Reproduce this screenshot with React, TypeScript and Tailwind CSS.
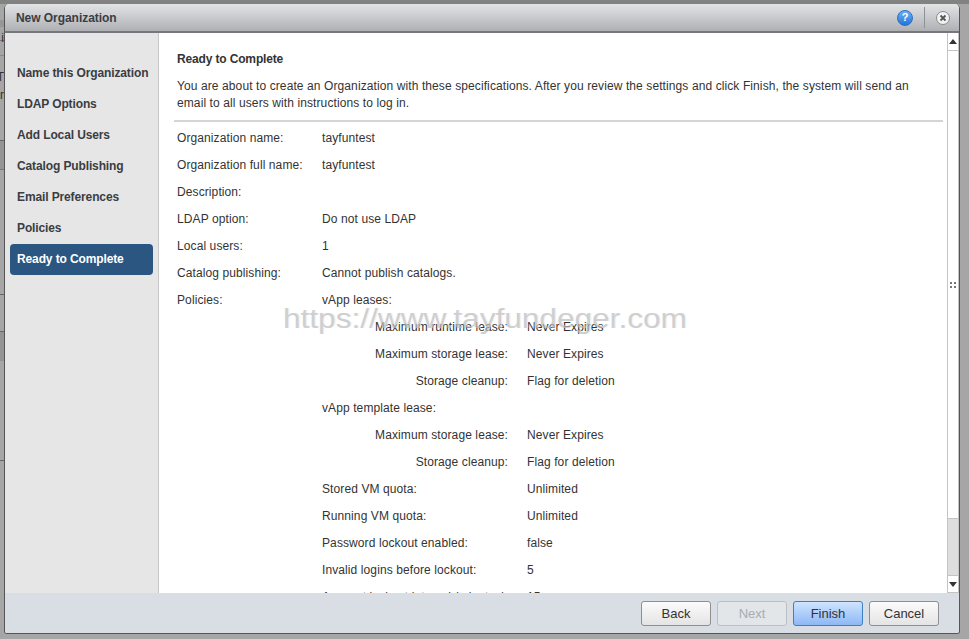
import { ReactNode } from "react";

const steps = [
  "Name this Organization",
  "LDAP Options",
  "Add Local Users",
  "Catalog Publishing",
  "Email Preferences",
  "Policies",
  "Ready to Complete",
];

const summary = [
  { label: "Organization name:", value: "tayfuntest" },
  { label: "Organization full name:", value: "tayfuntest" },
  { label: "Description:", value: "" },
  { label: "LDAP option:", value: "Do not use LDAP" },
  { label: "Local users:", value: "1" },
  { label: "Catalog publishing:", value: "Cannot publish catalogs." },
];

function Row({ children }: { children: ReactNode }) {
  return <div className="flex h-[27px] items-center whitespace-nowrap">{children}</div>;
}

function LeaseRow({ label, value }: { label: string; value: string }) {
  return (
    <Row>
      <span className="w-[186px] text-right">{label}</span>
      <span className="ml-[19px]">{value}</span>
    </Row>
  );
}

function PolicyRow({ label, value }: { label: string; value: string }) {
  return (
    <Row>
      <span className="w-[205px]">{label}</span>
      <span>{value}</span>
    </Row>
  );
}

function Btn({ children, kind }: { children: ReactNode; kind?: "primary" | "disabled" }) {
  let cls = "border-[#8f8f8f] bg-gradient-to-b from-[#fbfbfb] to-[#e4e4e4] text-[#333]";
  if (kind === "primary") cls = "border-[#3f7fc4] bg-gradient-to-b from-[#cfe4ff] to-[#8db8f5] text-[#333]";
  if (kind === "disabled") cls = "border-[#bcc0c4] bg-[#e3e6e9] text-[#a9acb0]";
  return (
    <button type="button" className={`h-[25px] w-[70px] rounded-[3px] border text-[13px] ${cls}`}>
      {children}
    </button>
  );
}

function BackdropStrip() {
  return (
    <div className="w-[4px] shrink-0 overflow-hidden text-[12px] text-[#333]">
      <div className="h-[16px]" />
      <div className="h-[7px] bg-[#979797]" />
      <div className="relative h-[14px] border-b border-[#777]">
        <span className="absolute right-0 top-[2px]">i</span>
      </div>
      <div className="h-[15px] border-b border-[#8a8a8a]" />
      <div className="relative h-[85px] border-b border-[#666]">
        <span className="absolute right-0 top-[12px]">T</span>
        <span className="absolute right-0 top-[30px]">r</span>
      </div>
      <div className="h-[29px] border-b border-[#777] bg-[#949494]" />
      <div className="h-[125px] border-b border-[#666]" />
      <div className="h-[37px] border-b border-[#666]" />
      <div className="h-[29px] bg-[#949494]" />
      <div className="h-[100px] border-b border-[#666]" />
    </div>
  );
}

function Scrollbar() {
  return (
    <div className="relative flex w-[12px] shrink-0 flex-col border-l border-r border-[#c4c4c4] bg-[#dedede]">
      <div className="flex h-[18px] items-center justify-center border-b border-[#c4c4c4] bg-white">
        <svg width="8" height="5" viewBox="0 0 8 5"><path d="M4 0 8 5H0z" fill="#333" /></svg>
      </div>
      <div className="flex h-[468px] items-center justify-center border-b border-[#c4c4c4] bg-white">
        <svg width="7" height="7" viewBox="0 0 7 7" className="mb-[-1px]">
          <g fill="#777">
            <rect x="0" y="0" width="2" height="2" />
            <rect x="4" y="0" width="2" height="2" />
            <rect x="0" y="4" width="2" height="2" />
            <rect x="4" y="4" width="2" height="2" />
          </g>
        </svg>
      </div>
      <div className="flex-1" />
      <div className="flex h-[18px] items-center justify-center border-y border-[#c4c4c4] bg-white">
        <svg width="8" height="5" viewBox="0 0 8 5"><path d="M0 0H8L4 5z" fill="#333" /></svg>
      </div>
    </div>
  );
}

export default function App() {
  return (
    <div className="flex h-screen flex-col overflow-hidden bg-[#a6a6a6] font-['Liberation_Sans',Arial,sans-serif] text-[12px] text-[#333]">
      <div className="h-[4px] shrink-0 bg-[#828282]" />
      <div className="flex">
        <BackdropStrip />
        <div className="flex h-[630px] w-[956px] flex-col overflow-hidden rounded-t-[5px] rounded-bl-[3px] rounded-br-[3px] border-x border-b border-[#555] bg-white">
          {/* title bar */}
          <div className="flex h-[29px] shrink-0 items-center border-b-2 border-[#74777b] bg-gradient-to-b from-[#e3e4e6] to-[#aeb0b4] pl-[11px] pr-[9px]">
            <span className="text-[12px] font-bold tracking-[-0.05px] text-[#3a3d42]">New Organization</span>
            <div className="ml-auto flex items-center">
              <div className="flex h-[16px] w-[16px] items-center justify-center rounded-full border border-[#2a6fc9] bg-gradient-to-b from-[#6fb0f2] to-[#2473d8] text-[11px] font-bold leading-none text-white">
                ?
              </div>
              <div className="mx-[11px] h-[21px] w-px bg-[#8f9195]" />
              <div className="flex h-[14px] w-[14px] items-center justify-center rounded-full border border-[#8a8a8a] bg-[#f2f2f2]">
                <svg width="8" height="8" viewBox="0 0 8 8">
                  <path d="M1.5 1.5 6.5 6.5M6.5 1.5 1.5 6.5" stroke="#555" strokeWidth="1.8" />
                </svg>
              </div>
            </div>
          </div>

          <div className="flex min-h-0 flex-1">
            {/* wizard steps */}
            <div className="w-[154px] shrink-0 border-r border-[#c8c8c8] bg-[#e6e6e6] pl-[5px] pr-[5px] pt-[25px] tracking-[-0.12px]">
              {steps.map((step) => (
                <div
                  key={step}
                  className={
                    step === "Ready to Complete"
                      ? "flex h-[31px] items-center whitespace-nowrap rounded-[4px] bg-[#2b5682] px-[7px] pb-[2px] font-bold text-white"
                      : "flex h-[31px] items-center whitespace-nowrap px-[7px] pb-[2px] font-bold text-[#3a3d42]"
                  }
                >
                  {step}
                </div>
              ))}
            </div>

            {/* summary */}
            <div className="relative min-w-0 flex-1 overflow-hidden pl-[15px] pr-[4px] pt-[18px] tracking-[0.1px]">
              <div className="flex h-[16px] items-center pl-[3px] font-bold tracking-[-0.15px]">Ready to Complete</div>
              <p className="mt-[11px] pb-[8px] pl-[3px] pr-[24px] leading-[17px]">
                You are about to create an Organization with these specifications. After you review the settings and
                click Finish, the system will send an email to all users with instructions to log in.
              </p>
              <div className="border-t-2 border-[#d3d6d6] pl-[3px] pt-[2px]">
                {summary.map((row) => (
                  <Row key={row.label}>
                    <span className="w-[145px]">{row.label}</span>
                    <span>{row.value}</span>
                  </Row>
                ))}
                <div className="flex">
                  <div className="flex h-[27px] w-[145px] items-center">Policies:</div>
                  <div>
                    <Row>vApp leases:</Row>
                    <LeaseRow label="Maximum runtime lease:" value="Never Expires" />
                    <LeaseRow label="Maximum storage lease:" value="Never Expires" />
                    <LeaseRow label="Storage cleanup:" value="Flag for deletion" />
                    <Row>vApp template lease:</Row>
                    <LeaseRow label="Maximum storage lease:" value="Never Expires" />
                    <LeaseRow label="Storage cleanup:" value="Flag for deletion" />
                    <PolicyRow label="Stored VM quota:" value="Unlimited" />
                    <PolicyRow label="Running VM quota:" value="Unlimited" />
                    <PolicyRow label="Password lockout enabled:" value="false" />
                    <PolicyRow label="Invalid logins before lockout:" value="5" />
                    <PolicyRow label="Account lockout interval (minutes):" value="15" />
                  </div>
                </div>
              </div>
              {/* watermark */}
              <div className="pointer-events-none absolute left-[124px] top-[268px] origin-left scale-x-[1.17] whitespace-nowrap text-[27px] leading-[36px] tracking-normal text-[#bcbcbc] opacity-70 [text-shadow:1px_0_0_#ececec]">
                https://www.tayfundeger.com
              </div>
            </div>
            <Scrollbar />
          </div>

          {/* footer */}
          <div className="flex h-[40px] shrink-0 items-start justify-end gap-[6px] bg-[#d9dde4] pr-[20px] pt-[8px]">
            <Btn>Back</Btn>
            <Btn kind="disabled">Next</Btn>
            <Btn kind="primary">Finish</Btn>
            <Btn>Cancel</Btn>
          </div>
        </div>
      </div>
    </div>
  );
}
